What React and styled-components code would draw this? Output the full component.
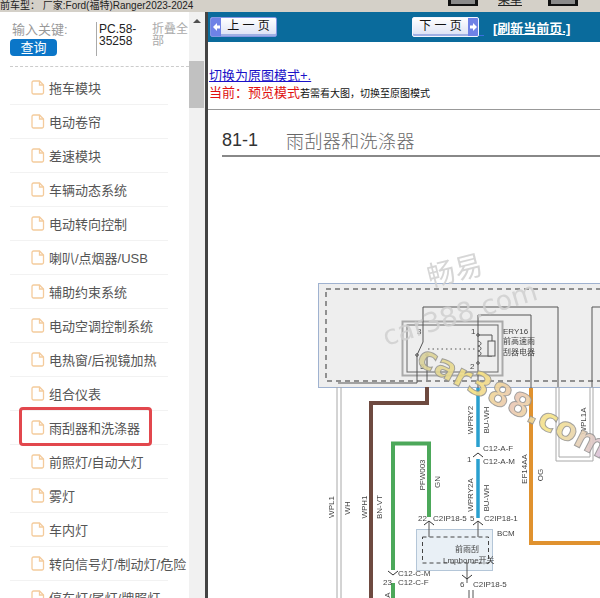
import React from "react";
import styled, { createGlobalStyle } from "styled-components";

const modules = [
  "拖车模块",
  "电动卷帘",
  "差速模块",
  "车辆动态系统",
  "电动转向控制",
  "喇叭/点烟器/USB",
  "辅助约束系统",
  "电动空调控制系统",
  "电热窗/后视镜加热",
  "组合仪表",
  "雨刮器和洗涤器",
  "前照灯/自动大灯",
  "雾灯",
  "车内灯",
  "转向信号灯/制动灯/危险",
  "停车灯/尾灯/牌照灯",
];

// 接线图文字: x, y, 内容, 竖排
const labels = [
  [417, 334, "3"], [471, 334, "1"], [420, 369, "5"], [470, 369, "2"],
  [503, 334, "ERY16"], [503, 344, "前高速雨"], [503, 355, "刮器电器"],
  [483, 451, "C12-A-F"], [483, 464, "C12-A-M"], [467, 462, "1"],
  [418, 521, "22"], [433, 521, "C2IP18-5"], [470, 521, "5"], [484, 521, "C2IP18-1"],
  [497, 536, "BCM"], [455, 552, "前雨刮"], [443, 563, "Lmphome开关"],
  [398, 576, "C12-C-M"], [383, 585, "23"], [398, 585, "C12-C-F"],
  [460, 587, "6"], [473, 587, "C2IP18-5"],
  [473, 420, "WPRY2", true], [489, 420, "BU-WH", true], [586, 421, "WPL1A", true],
  [527, 469, "EF14AA", true], [543, 475, "OG", true],
  [425, 475, "PFW003", true], [440, 482, "GN", true],
  [473, 495, "WPRY2A", true], [489, 498, "BU-WH", true],
  [334, 507, "WPL1", true], [350, 508, "WH", true], [367, 507, "WPH1", true], [382, 507, "BN-VT", true],
  [390, 595, "A", true],
];

const GlobalStyle = createGlobalStyle`
  html, body {
    margin: 0;
    padding: 0;
    overflow: hidden;
    background: #fff;
  }
`;

const Page = styled.div`
  width: 600px;
  height: 598px;
  display: flex;
  flex-direction: column;
  overflow: hidden;
  font-family: "Liberation Sans", "Noto Sans CJK SC", sans-serif;
`;

const TopBar = styled.div`
  flex: 0 0 12px;
  display: flex;
  background: #d4d0c8;
  overflow: hidden;
`;

const CarName = styled.div`
  width: 448px;
  font-size: 10px;
  line-height: 12px;
  color: #222;
  white-space: pre;
`;

const Stub = styled.div`
  width: 30px;
  height: 6px;
  box-sizing: border-box;
  background: #8a8a8a;
  border: solid #111;
  border-width: 0 3px 2px;
`;

const MenuLink = styled.div`
  width: 24px;
  height: 6px;
  margin: 0 26px 0 20px;
  display: flex;
  align-items: flex-end;
  overflow: hidden;
  font-size: 12px;
  line-height: 12px;
  color: #222;
  text-decoration: underline;
`;

const Body = styled.div`
  flex: 1;
  display: flex;
  min-height: 0;
`;

const Sidebar = styled.div`
  flex: 0 0 205px;
  display: flex;
  overflow: hidden;
`;

const SidePanel = styled.div`
  flex: 0 0 189px;
  width: 189px;
  overflow: hidden;
`;

const SearchRow = styled.div`
  height: 44px;
  margin-top: 10px;
  padding-left: 10px;
  display: flex;
`;

const SearchLeft = styled.div`
  width: 86px;
  color: #999;
  font-size: 13px;
  line-height: 15px;
`;

const KeyLabel = styled.div`
  padding-left: 2px;
`;

const QueryButton = styled.div`
  width: 47px;
  height: 17px;
  margin-top: 2px;
  border-radius: 4px;
  background: #0b76c8;
  color: #fff;
  font-size: 13px;
  line-height: 17px;
  text-align: center;
`;

const PartNo = styled.div`
  width: 53px;
  height: 33px;
  padding: 1px 0 0 2px;
  border-left: 1px solid #aaa;
  color: #222;
  font-size: 12px;
  line-height: 12px;
`;

const Collapse = styled.div`
  width: 37px;
  color: #aaa;
  font-size: 12px;
  line-height: 12px;
  padding-top: 1px;
`;

const DashLine = styled.div`
  margin: 0 0 4px 10px;
  width: 179px;
  border-top: 1px dashed #ccc;
`;

const ModuleRow = styled.div`
  position: relative;
  width: 158px;
  height: 34px;
  margin-left: 10px;
  box-sizing: border-box;
  display: flex;
  align-items: center;
  gap: 4px;
  padding-left: 21px;
  border-bottom: 1px solid #f2f2f2;
  color: #555;
  font-size: 13px;
  white-space: nowrap;

  svg {
    flex: 0 0 14px;
  }
`;

const Marker = styled.div`
  position: absolute;
  left: 9px;
  top: -4px;
  width: 133px;
  height: 39px;
  box-sizing: border-box;
  border: 3px solid #e2474d;
  border-radius: 4px;
`;

const Scrollbar = styled.div`
  flex: 0 0 16px;
  background: #f1f1f1;
`;

const ScrollArrow = styled.div`
  width: 0;
  margin: 7px auto 0;
  border-left: 4px solid transparent;
  border-right: 4px solid transparent;
  border-bottom: 4px solid #505050;
`;

const ScrollThumb = styled.div`
  height: 47px;
  margin: 38px 1px 0 0;
  background: #c1c1c1;
`;

const Main = styled.div`
  flex: 1;
  border-left: 3px solid #444;
  min-width: 0;
  display: flex;
  flex-direction: column;
`;

const NavBar = styled.div`
  flex: 0 0 30px;
  display: flex;
  align-items: center;
  padding-left: 2px;
  background: #0a6b9c;
`;

const NavButton = styled.div`
  width: 67px;
  height: 20px;
  box-sizing: border-box;
  display: flex;
  flex-direction: ${(p) => (p.$next ? "row-reverse" : "row")};
  margin-left: ${(p) => (p.$next ? "135px" : "0")};
  border: 1px solid ${(p) => (p.$next ? "#f4f6ff" : "#8497e2")};
  box-shadow: inset 0 -2px 0 #9fb0e4;
  border-radius: 2px;
  background: linear-gradient(#fff, #dbe1f4);
  color: #111;
  font-size: 12px;
  line-height: 17px;
  overflow: hidden;
`;

const NavArrow = styled.div`
  flex: 0 0 10px;
  display: flex;
  align-items: center;
  justify-content: center;
  background: #6f82e6;
`;

const NavText = styled.div`
  flex: 1;
  text-align: center;
  white-space: pre;
`;

const GapLink = styled.div`
  width: 5px;
  height: 17px;
  border-bottom: 1px solid #3a6fe0;
`;

const Refresh = styled.div`
  margin-left: 9px;
  margin-top: 1px;
  color: #fff;
  font-size: 13px;
  font-weight: bold;
  text-decoration: underline;
  white-space: nowrap;
`;

const Content = styled.div`
  flex: 1;
  min-height: 0;
  overflow: hidden;
  padding-top: 26px;
`;

const SwitchLink = styled.div`
  height: 17px;
  margin-left: 1px;
  color: #1a12c8;
  font-size: 13px;
  line-height: 16px;
  text-decoration: underline;
`;

const ModeLine = styled.div`
  height: 16px;
  margin-left: 1px;
  color: #e01010;
  font-size: 13px;
  line-height: 16px;
  white-space: nowrap;
`;

const ModeHint = styled.span`
  color: #111;
  font-size: 10px;
`;

const Rule = styled.div`
  height: 0;
  margin-top: 8px;
  border-top: 1px solid #999;
`;

const TitleRow = styled.div`
  height: 47px;
  margin-left: 14px;
  box-sizing: border-box;
  display: flex;
  align-items: flex-end;
  padding-bottom: 3px;
  border-bottom: 2px solid #888;
  font-size: 18px;
  line-height: 24px;
`;

const Chapter = styled.div`
  width: 64px;
  color: #333;
`;

const ChapterName = styled.div`
  color: #666;
  font-family: "Noto Sans CJK SC", sans-serif;
  font-weight: 300;
  letter-spacing: 0.4px;
`;

const Diagram = styled.svg`
  display: block;
  width: 392px;
  height: 441px;
  filter: blur(0.3px);
`;

const WireText = styled.text`
  font-family: "Liberation Sans", "Noto Sans CJK SC", sans-serif;
  font-size: 8px;
  fill: #444;
`;

const GrayMark = styled.text`
  font-family: "DejaVu Sans", "Noto Sans CJK SC", sans-serif;
  fill: #cfcfcf;
  fill-opacity: 0.85;
`;

const ColorMark = styled.text`
  font-family: "DejaVu Sans", sans-serif;
  font-size: 32px;
  font-weight: bold;
  fill-opacity: 0.9;
  stroke: #8f8f8f;
  stroke-width: 1px;
  stroke-opacity: 0.8;
`;

const DocIcon = () => (
  <svg width="14" height="15" viewBox="0 0 14 15" fill="none" stroke="#f4cb9c" strokeWidth="1.3">
    <path d="M2.5 1h6l4 4v7.5a1.5 1.5 0 0 1-1.500 1.500h-8.500a1.500 1.500 0 0 1-1.500-1.500v-10a1.500 1.500 0 0 1 1.500-1.500z" />
    <path d="M8.500 1v4h4" />
  </svg>
);

const ArrowIcon = ({ right }) => (
  <svg width="7" height="8" viewBox="0 0 7 8" fill="#fff">
    <path d={right ? "M0 2.500h3v-2.500l4 4-4 4v-2.500h-3z" : "M7 2.500h-3v-2.500l-4 4 4 4v-2.500h3z"} />
  </svg>
);

const Connector = ({ x, y, down }) => (
  <path
    d={down ? `M${x - 5} ${y - 3}L${x} ${y + 1}L${x + 5} ${y - 3}` : `M${x - 5} ${y + 3}L${x} ${y - 1}L${x + 5} ${y + 3}`}
    fill="none"
    stroke="#333"
    strokeWidth="1"
  />
);

const WiringDiagram = () => (
  <Diagram viewBox="208 157 392 441">
    <defs>
      <linearGradient id="markFill" x1="0" y1="0" x2="1" y2="0">
        <stop offset="0" stopColor="#d6cf9c" />
        <stop offset="0.3" stopColor="#f5e07e" />
        <stop offset="0.5" stopColor="#e8c6b4" />
        <stop offset="0.7" stopColor="#f5e486" />
        <stop offset="1" stopColor="#d8bfdc" />
      </linearGradient>
    </defs>

    {/* 模块外框 */}
    <rect x="318.500" y="283.500" width="290" height="104" fill="#eeeeee" stroke="#9fb2d0" />
    <rect x="326" y="289" width="290" height="92" fill="none" stroke="#333" strokeDasharray="5 4" />
    <rect x="402.500" y="321.500" width="100" height="54" fill="none" stroke="#aaa" strokeWidth="2" />
    <rect x="407" y="325" width="91" height="47" fill="none" stroke="#666" />

    {/* 细线 */}
    <g fill="none" stroke="#555" strokeWidth="1">
      <path d="M558 387V307H423V342L417 355V383H338" />
      <path d="M600 307H592V387" />
      <path d="M478 392V315H531V392" />
      <path d="M478 335H492V356H478" />
      <path d="M427 380V355" />
      <path d="M428 349H476" strokeDasharray="1.500 3" />
      <rect x="488" y="341" width="7" height="15" fill="#eee" />
      <path d="M478 341c4 1 4 4 0 5c4 1 4 4 0 5c4 1 4 4 0 5" />
      <circle cx="478" cy="335" r="1.300" />
      <circle cx="478" cy="363" r="1.300" />
      <circle cx="417" cy="355" r="1.300" />
      <circle cx="427" cy="355" r="1.300" />
    </g>
    <g fill="none" stroke="#a8a8a8" strokeWidth="1">
      <path d="M337 598V387" />
      <path d="M341 598V387" />
      <path d="M556 387V461H593V387" />
      <path d="M559 387V457H590V387" />
    </g>

    {/* 粗线 */}
    <path d="M427 387V403H371V598" fill="none" stroke="#6e4a40" strokeWidth="4" />
    <path d="M393 570V443.500H429V517" fill="none" stroke="#4ca85a" strokeWidth="4" />
    <path d="M393 583V598" fill="none" stroke="#4ca85a" strokeWidth="4" />
    <path d="M478 388V447M478 459V518" fill="none" stroke="#2aa0cf" strokeWidth="3.500" />
    <path d="M531 388V543H600" fill="none" stroke="#e0922f" strokeWidth="4" />

    {/* BCM */}
    <rect x="416.500" y="529.500" width="76" height="41" fill="#e9f0f6" stroke="#b4c6d8" />
    <rect x="422.500" y="537" width="66" height="26" fill="none" stroke="#444" strokeDasharray="4 3" />
    <path d="M429 522V537M478 522V537M467 563V583M469 590V598M473 590V598" stroke="#555" fill="none" />
    <Connector x={429} y={522} />
    <Connector x={478} y={522} />
    <Connector x={478} y={454} />
    <Connector x={393} y={574} down />
    <Connector x={467} y={578} down />

    {labels.map(([x, y, text, vertical]) => (
      <WireText
        key={`${x}-${y}`}
        x={x}
        y={y}
        textAnchor={vertical ? "middle" : "start"}
        transform={vertical ? `rotate(-90 ${x} ${y})` : undefined}
      >
        {text}
      </WireText>
    ))}

    {/* 水印 */}
    <GrayMark x="430" y="287" fontSize="28" transform="rotate(-14 430 287)">畅易</GrayMark>
    <GrayMark x="386" y="346" fontSize="27" transform="rotate(-17 386 346)">car388.com</GrayMark>
    <ColorMark x="415" y="364" fill="url(#markFill)" transform="rotate(27 415 364)">car388.com</ColorMark>
  </Diagram>
);

export default function App() {
  return (
    <>
      <GlobalStyle />
      <Page>
        <TopBar>
          <CarName>前车型： 厂家:Ford(福特)Ranger2023-2024</CarName>
          <Stub />
          <MenuLink>菜单</MenuLink>
          <Stub />
        </TopBar>
        <Body>
          <Sidebar>
            <SidePanel>
              <SearchRow>
                <SearchLeft>
                  <KeyLabel>输入关键:</KeyLabel>
                  <QueryButton>查询</QueryButton>
                </SearchLeft>
                <PartNo>PC.58-35258</PartNo>
                <Collapse>折叠全部</Collapse>
              </SearchRow>
              <DashLine />
              {modules.map((name) => (
                <ModuleRow key={name}>
                  <DocIcon />
                  {name}
                  {name === "雨刮器和洗涤器" && <Marker />}
                </ModuleRow>
              ))}
            </SidePanel>
            <Scrollbar>
              <ScrollArrow />
              <ScrollThumb />
            </Scrollbar>
          </Sidebar>
          <Main>
            <NavBar>
              <NavButton>
                <NavArrow><ArrowIcon /></NavArrow>
                <NavText>上 一 页</NavText>
              </NavButton>
              <NavButton $next>
                <NavArrow><ArrowIcon right /></NavArrow>
                <NavText>下 一 页</NavText>
              </NavButton>
              <GapLink />
              <Refresh>[刷新当前页.]</Refresh>
            </NavBar>
            <Content>
              <SwitchLink>切换为原图模式+.</SwitchLink>
              <ModeLine>
                当前：预览模式<ModeHint>若需看大图，切换至原图模式</ModeHint>
              </ModeLine>
              <Rule />
              <TitleRow>
                <Chapter>81-1</Chapter>
                <ChapterName>雨刮器和洗涤器</ChapterName>
              </TitleRow>
              <WiringDiagram />
            </Content>
          </Main>
        </Body>
      </Page>
    </>
  );
}
